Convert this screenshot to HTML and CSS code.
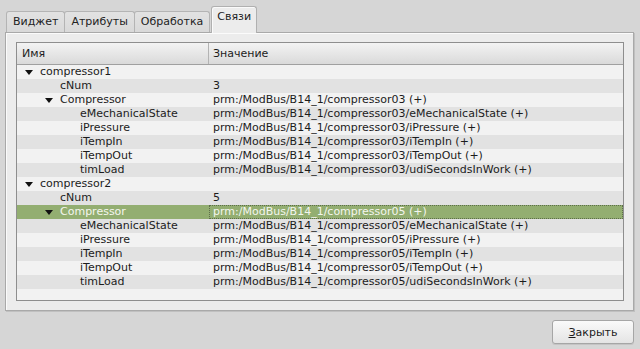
FILE: index.html
```html
<!DOCTYPE html>
<html lang="ru">

    <head>
        <meta charset="UTF-8" />
        <title>Связи</title>
        <link rel="stylesheet" href="styles.css">
    </head>

    <body>
        <div class="dialog">
            <!-- вкладки -->
            <div class="tabs">
                <div class="tab">Виджет</div>
                <div class="tab">Атрибуты</div>
                <div class="tab">Обработка</div>
                <div class="tab active">Связи</div>
            </div>
            <div class="pane">
                <div class="tree">
                    <div class="tree-head">
                        <div class="col-name">Имя</div>
                        <div class="col-value">Значение</div>
                    </div>
                    <div class="tree-body">
                        <div class="row">
                            <div class="col-name lvl0"><span class="arrow"></span>compressor1</div>
                            <div class="col-value"></div>
                        </div>
                        <div class="row alt">
                            <div class="col-name lvl1"><span class="noarrow"></span>cNum</div>
                            <div class="col-value">3</div>
                        </div>
                        <div class="row">
                            <div class="col-name lvl1"><span class="arrow"></span>Compressor</div>
                            <div class="col-value">prm:/ModBus/B14_1/compressor03 (+)</div>
                        </div>
                        <div class="row alt">
                            <div class="col-name lvl2"><span class="noarrow"></span>eMechanicalState</div>
                            <div class="col-value">prm:/ModBus/B14_1/compressor03/eMechanicalState (+)</div>
                        </div>
                        <div class="row">
                            <div class="col-name lvl2"><span class="noarrow"></span>iPressure</div>
                            <div class="col-value">prm:/ModBus/B14_1/compressor03/iPressure (+)</div>
                        </div>
                        <div class="row alt">
                            <div class="col-name lvl2"><span class="noarrow"></span>iTempIn</div>
                            <div class="col-value">prm:/ModBus/B14_1/compressor03/iTempIn (+)</div>
                        </div>
                        <div class="row">
                            <div class="col-name lvl2"><span class="noarrow"></span>iTempOut</div>
                            <div class="col-value">prm:/ModBus/B14_1/compressor03/iTempOut (+)</div>
                        </div>
                        <div class="row alt">
                            <div class="col-name lvl2"><span class="noarrow"></span>timLoad</div>
                            <div class="col-value">prm:/ModBus/B14_1/compressor03/udiSecondsInWork (+)</div>
                        </div>
                        <div class="row">
                            <div class="col-name lvl0"><span class="arrow"></span>compressor2</div>
                            <div class="col-value"></div>
                        </div>
                        <div class="row alt">
                            <div class="col-name lvl1"><span class="noarrow"></span>cNum</div>
                            <div class="col-value">5</div>
                        </div>
                        <div class="row selected">
                            <div class="col-name lvl1"><span class="arrow"></span>Compressor</div>
                            <div class="col-value focus">prm:/ModBus/B14_1/compressor05 (+)</div>
                        </div>
                        <div class="row alt">
                            <div class="col-name lvl2"><span class="noarrow"></span>eMechanicalState</div>
                            <div class="col-value">prm:/ModBus/B14_1/compressor05/eMechanicalState (+)</div>
                        </div>
                        <div class="row">
                            <div class="col-name lvl2"><span class="noarrow"></span>iPressure</div>
                            <div class="col-value">prm:/ModBus/B14_1/compressor05/iPressure (+)</div>
                        </div>
                        <div class="row alt">
                            <div class="col-name lvl2"><span class="noarrow"></span>iTempIn</div>
                            <div class="col-value">prm:/ModBus/B14_1/compressor05/iTempIn (+)</div>
                        </div>
                        <div class="row">
                            <div class="col-name lvl2"><span class="noarrow"></span>iTempOut</div>
                            <div class="col-value">prm:/ModBus/B14_1/compressor05/iTempOut (+)</div>
                        </div>
                        <div class="row alt">
                            <div class="col-name lvl2"><span class="noarrow"></span>timLoad</div>
                            <div class="col-value">prm:/ModBus/B14_1/compressor05/udiSecondsInWork (+)</div>
                        </div>
                    </div>
                </div>
            </div>
            <div class="buttons">
                <button class="btn"><u>З</u>акрыть</button>
            </div>
        </div>
    </body>

</html>
```

FILE: styles.css
```css
body {
    margin: 0;
    background: #d6d6d6;
    font-family: 'DejaVu Sans', sans-serif;
    font-size: 11px;
    color: #1c1c1c;
}

.dialog {
    width: 640px;
    height: 349px;
    padding: 6px 6px 0 5px;
    box-sizing: border-box;
}

.tabs {
    display: flex;
    align-items: flex-end;
    height: 26px;
    padding-left: 1px;
}

.tab {
    height: 21px;
    line-height: 20px;
    padding: 0 6px;
    background: linear-gradient(#e2e2e2, #d9d9d9);
    border: 1px solid #b4b4b4;
    border-bottom: none;
    border-radius: 3px 3px 0 0;
    box-sizing: border-box;
    color: #222;
}

.tab + .tab {
    margin-left: -1px;
}

.tab.active {
    height: 27px;
    line-height: 20px;
    padding: 0 5px;
    margin-left: 1px;
    margin-bottom: -1px;
    background: #ececec;
    border-color: #b0b0b0;
    box-shadow: inset 1px 1px 0 #fafafa;
    position: relative;
}

.pane {
    height: 279px;
    background: #ececec;
    border: 1px solid #a9a9a9;
    box-shadow: inset 1px 1px 0 #fbfbfb, 1px 1px 0 #c0c0c0;
    padding: 9px 9px 9px 10px;
    box-sizing: border-box;
}

.tree {
    height: 100%;
    border: 1px solid #8e8e8e;
    background: #f2f2f2;
    box-sizing: border-box;
    overflow: hidden;
}

.tree-head {
    display: flex;
    height: 22px;
    line-height: 21px;
    background: linear-gradient(#f3f3f3, #dadada);
    border-bottom: 1px solid #a0a0a0;
    box-sizing: border-box;
}

.tree-head .col-name {
    padding-left: 5px;
    border-right: 1px solid #b3b3b3;
}

.tree-head .col-value {
    padding-left: 4px;
}

.col-name {
    width: 192px;
    flex: none;
    box-sizing: border-box;
    display: flex;
    align-items: center;
    white-space: nowrap;
}

.col-value {
    flex: 1;
    padding-left: 4px;
    white-space: nowrap;
}

.row {
    display: flex;
    height: 14px;
    line-height: 14px;
    background: #f2f2f2;
}

.row.alt {
    background: #e2e2e2;
}

.row.selected {
    background: #93ae71;
    color: #f3f6ee;
}

.col-value.focus {
    border: 1px dotted #5d6e4a;
    line-height: 12px;
    padding-left: 3px;
}

.lvl0 { padding-left: 8px; }
.lvl1 { padding-left: 28px; }
.lvl2 { padding-left: 48px; }

.arrow,
.noarrow {
    display: inline-block;
    width: 15px;
    flex: none;
}

.arrow::before {
    content: "";
    display: block;
    width: 0;
    height: 0;
    margin-top: 1px;
    border-left: 4.5px solid transparent;
    border-right: 4.5px solid transparent;
    border-top: 5px solid #111;
}

.buttons {
    display: flex;
    justify-content: flex-end;
    padding-top: 9px;
}

.btn {
    width: 82px;
    height: 24px;
    font-family: 'DejaVu Sans', sans-serif;
    font-size: 11px;
    color: #1c1c1c;
    background: linear-gradient(#fafafa, #e4e4e4);
    border: 1px solid #a6a6a6;
    border-radius: 3px;
    box-shadow: 0 1px 0 #c4c4c4;
    padding: 0;
}

.btn u {
    text-decoration-thickness: 1px;
}
```
